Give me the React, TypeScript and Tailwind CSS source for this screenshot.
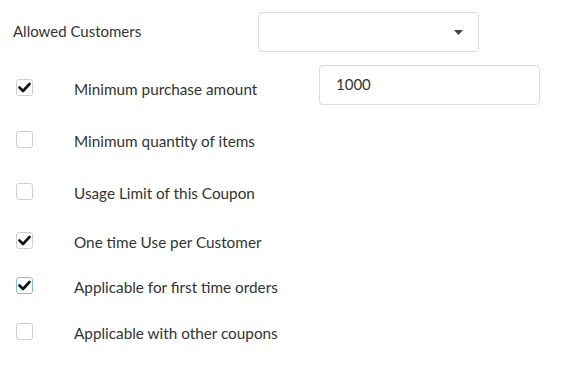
const font = { fontFamily: "Lato, 'Open Sans', sans-serif" };

interface Option {
  label: string;
  checked: boolean;
  focused?: boolean;
  gap: string;
}

const options: Option[] = [
  { label: "Minimum quantity of items", checked: false, gap: "mt-[26px]" },
  { label: "Usage Limit of this Coupon", checked: false, gap: "mt-[32px]" },
  { label: "One time Use per Customer", checked: true, gap: "mt-[29px]" },
  { label: "Applicable for first time orders", checked: true, focused: true, gap: "mt-[25px]" },
  { label: "Applicable with other coupons", checked: false, gap: "mt-[26px]" },
];

const Checkbox = ({ checked, focused }: { checked: boolean; focused?: boolean }) => (
  <div
    className={`flex h-[17px] w-[17px] shrink-0 items-center justify-center rounded-[3px] border bg-white ${
      focused ? "border-[#7cc2dd]" : "border-[#cfcfcf]"
    }`}
  >
    {checked && (
      <svg width="13" height="11" viewBox="0 0 13 11">
        <path d="M1.5 5.5 L5 9 L11.5 2" fill="none" stroke="#111" strokeWidth="2.6" strokeLinecap="round" strokeLinejoin="round" />
      </svg>
    )}
  </div>
);

export default function App() {
  return (
    <div className="min-h-[369px] w-[567px] bg-white pt-[12px] text-[15px] text-[#333]" style={font}>
      <div className="flex h-[40px] items-center">
        <div className="w-[258px] pb-[2px] pl-[13px]">Allowed Customers</div>
        <div className="flex h-[40px] w-[221px] items-center justify-end rounded-[4px] border border-[#dcdcdc] pr-[15px]">
          <svg width="9" height="5" viewBox="0 0 9 5">
            <path d="M0 0 H9 L4.5 5 Z" fill="#444" />
          </svg>
        </div>
      </div>

      <div className="mt-[13px] flex items-start">
        <div className="ml-[16px] mt-[14px]">
          <Checkbox checked />
        </div>
        <div className="ml-[41px] mt-[14px] w-[245px] text-[15.3px] leading-[20px]">Minimum purchase amount</div>
        <div className="flex h-[40px] w-[221px] items-center rounded-[4px] border border-[#dcdcdc] pl-[16px] pb-[2px]">
          1000
        </div>
      </div>

      {options.map((o) => (
        <div key={o.label} className={`flex items-start ${o.gap}`}>
          <div className="ml-[16px]">
            <Checkbox checked={o.checked} focused={o.focused} />
          </div>
          <div className="ml-[41px] text-[15.3px] leading-[20px]">{o.label}</div>
        </div>
      ))}
    </div>
  );
}
